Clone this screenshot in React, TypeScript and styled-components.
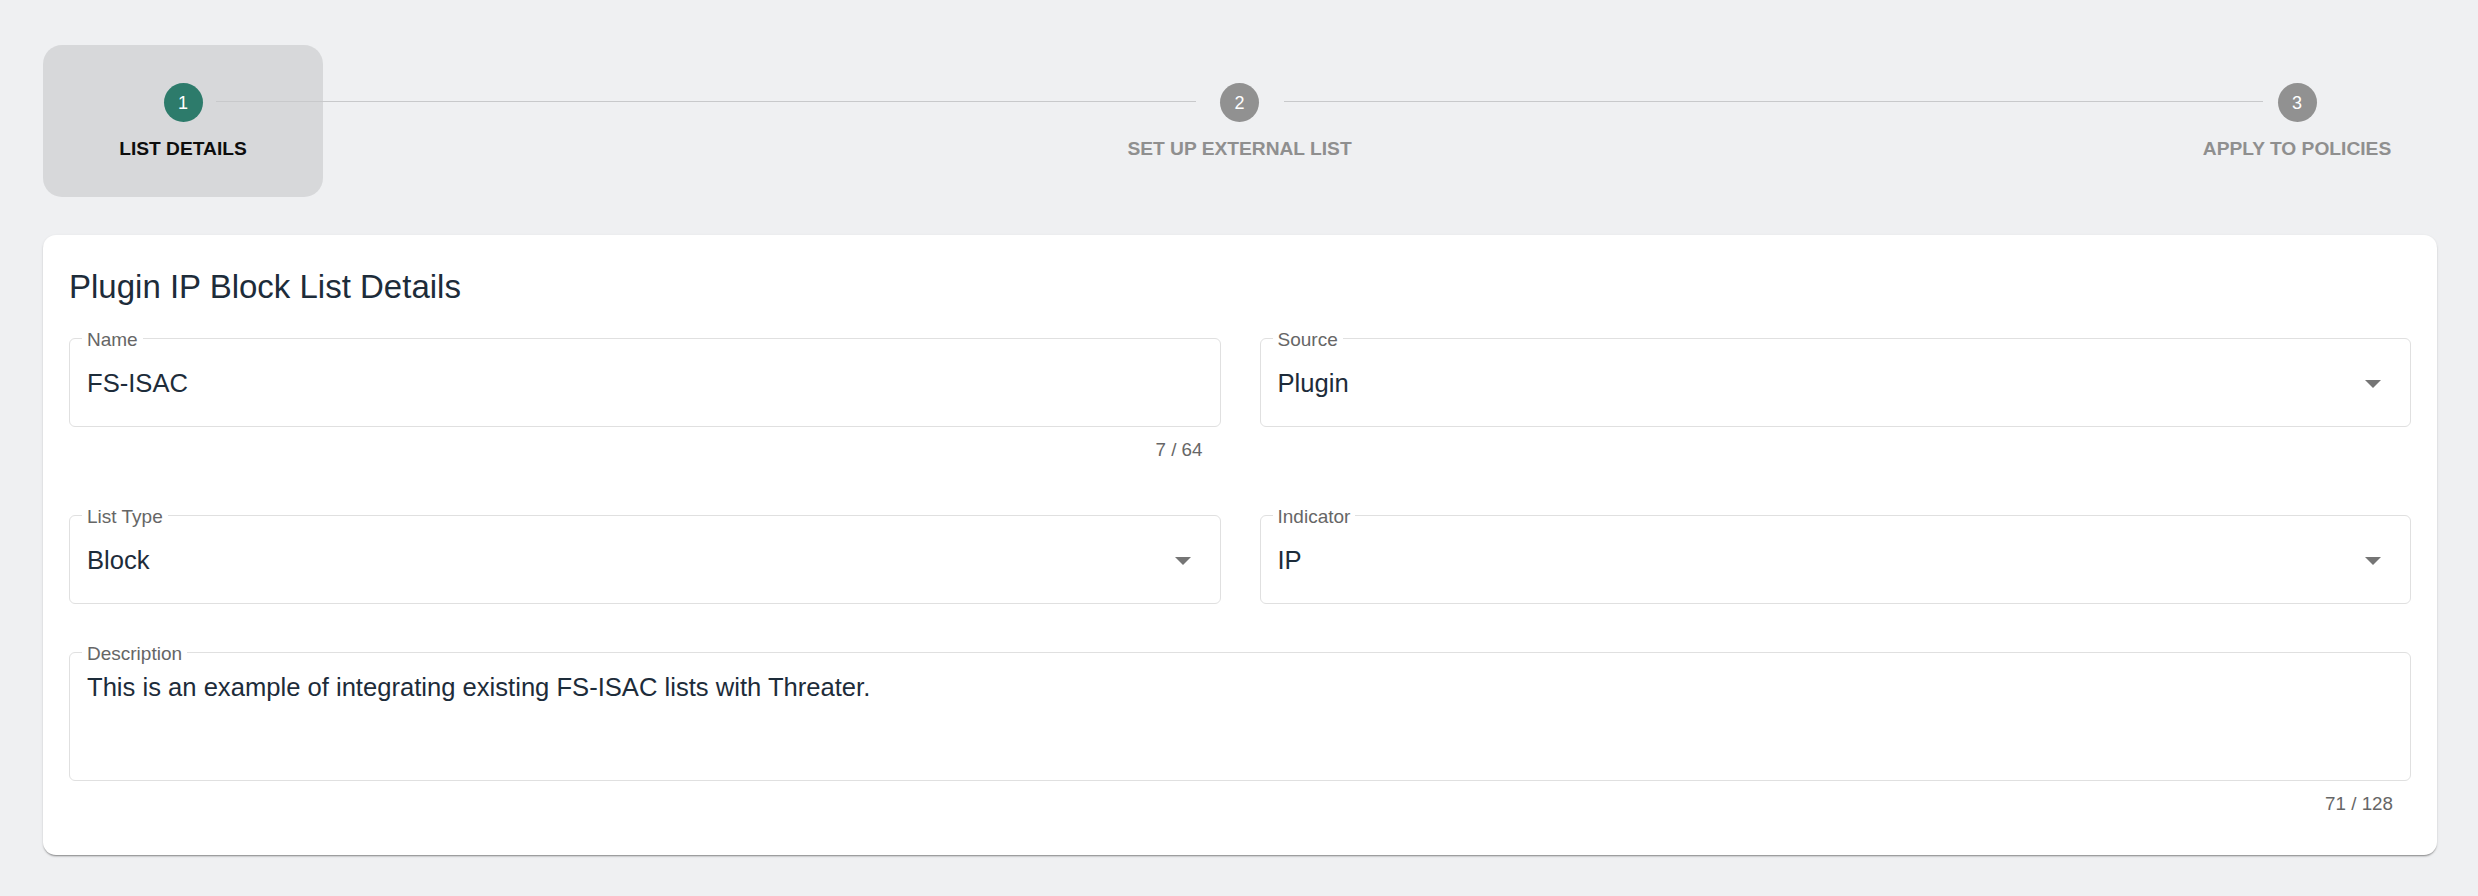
import React from "react";
import styled, { createGlobalStyle } from "styled-components";

const GlobalStyle = createGlobalStyle`
  html, body {
    margin: 0;
    padding: 0;
    background: #eff0f2;
  }
  body {
    font-family: "Liberation Sans", Arial, Helvetica, sans-serif;
  }
  * { box-sizing: border-box; }
`;

const Page = styled.div`
  min-height: 100vh;
  padding: 45px 41px 40px 43px;
  background: #eff0f2;
`;

const Stepper = styled.div`
  display: flex;
  align-items: flex-start;
`;

const Step = styled.div<{ $active?: boolean }>`
  width: 280px;
  flex-shrink: 0;
  display: flex;
  flex-direction: column;
  align-items: center;
  padding: 38px 0 34px;
  border-radius: 19px;
  background: ${(p) => (p.$active ? "#d7d8da" : "transparent")};
`;

const StepCircle = styled.div<{ $active?: boolean }>`
  width: 39px;
  height: 39px;
  border-radius: 50%;
  background: ${(p) => (p.$active ? "#2d7b6b" : "#919191")};
  color: #ffffff;
  font-size: 18px;
  line-height: 1;
  display: flex;
  align-items: center;
  justify-content: center;
`;

const StepLabel = styled.div<{ $active?: boolean }>`
  margin-top: 13px;
  font-size: 19.2px;
  line-height: 28px;
  font-weight: 700;
  text-transform: uppercase;
  white-space: nowrap;
  color: ${(p) => (p.$active ? "#0d0d0d" : "#8f8f8f")};
`;

const Connector = styled.div<{ $inL: number; $inR: number }>`
  flex: 1;
  height: 1px;
  margin-top: 56px;
  margin-left: ${(p) => -p.$inL}px;
  margin-right: ${(p) => -p.$inR}px;
  background: #c8c9cb;
  position: relative;
  z-index: 1;
`;

const Card = styled.section`
  margin-top: 38px;
  background: #ffffff;
  border-radius: 13px;
  padding: 26px 26px 34px;
  box-shadow: 0 2px 2px -1px rgba(0, 0, 0, 0.35), 0 1px 3px rgba(0, 0, 0, 0.1),
    0 1px 1px rgba(0, 0, 0, 0.06);
`;

const Title = styled.h2`
  margin: 0 0 26px;
  font-size: 33px;
  line-height: 51px;
  font-weight: 400;
  color: #1d2c3a;
`;

const FormGrid = styled.div`
  display: grid;
  grid-template-columns: 1fr 1fr;
  column-gap: 39px;
  row-gap: 48px;
  align-items: start;
`;

const FieldGroup = styled.div<{ $wide?: boolean }>`
  display: flex;
  flex-direction: column;
  grid-column: ${(p) => (p.$wide ? "1 / span 2" : "auto")};
`;

const Outline = styled.div<{ $tall?: boolean }>`
  position: relative;
  height: ${(p) => (p.$tall ? "129px" : "89px")};
  border: 1px solid #e0e0e0;
  border-radius: 6px;
  display: flex;
  align-items: ${(p) => (p.$tall ? "flex-start" : "center")};
  padding: ${(p) => (p.$tall ? "16px 17px 0" : "0 29px 0 17px")};
`;

const FloatLabel = styled.span`
  position: absolute;
  top: -9px;
  left: 12px;
  padding: 0 5px;
  background: #ffffff;
  font-size: 19px;
  line-height: 1;
  color: #666666;
  white-space: nowrap;
`;

const Value = styled.div`
  flex: 1;
  font-size: 25.6px;
  line-height: 36px;
  color: #1d2c3a;
  white-space: nowrap;
`;

const Arrow = styled.svg`
  width: 16px;
  height: 8px;
  flex-shrink: 0;
  margin-top: 3px;
  fill: #757575;
`;

const Counter = styled.div`
  margin: 6px 18px 1px 0;
  text-align: right;
  font-size: 18.8px;
  line-height: 33px;
  color: #666666;
`;

type FieldProps = {
  label: string;
  value: string;
  select?: boolean;
  tall?: boolean;
};

const Field = ({ label, value, select, tall }: FieldProps) => (
  <Outline $tall={tall}>
    <FloatLabel>{label}</FloatLabel>
    <Value>{value}</Value>
    {select && (
      <Arrow viewBox="0 0 16 8" aria-hidden="true">
        <path d="M0 0 L16 0 L8 8 Z" />
      </Arrow>
    )}
  </Outline>
);

const steps = ["List Details", "Set up External List", "Apply to Policies"];

export default function App() {
  return (
    <>
      <GlobalStyle />
      <Page>
        <Stepper>
          <Step $active>
            <StepCircle $active>1</StepCircle>
            <StepLabel $active>{steps[0]}</StepLabel>
          </Step>
          <Connector $inL={107} $inR={96} />
          <Step>
            <StepCircle>2</StepCircle>
            <StepLabel>{steps[1]}</StepLabel>
          </Step>
          <Connector $inL={96} $inR={106} />
          <Step>
            <StepCircle>3</StepCircle>
            <StepLabel>{steps[2]}</StepLabel>
          </Step>
        </Stepper>

        <Card>
          <Title>Plugin IP Block List Details</Title>
          <FormGrid>
            <FieldGroup>
              <Field label="Name" value="FS-ISAC" />
              <Counter>7 / 64</Counter>
            </FieldGroup>
            <FieldGroup>
              <Field label="Source" value="Plugin" select />
            </FieldGroup>
            <FieldGroup>
              <Field label="List Type" value="Block" select />
            </FieldGroup>
            <FieldGroup>
              <Field label="Indicator" value="IP" select />
            </FieldGroup>
            <FieldGroup $wide>
              <Field
                label="Description"
                value="This is an example of integrating existing FS-ISAC lists with Threater."
                tall
              />
              <Counter>71 / 128</Counter>
            </FieldGroup>
          </FormGrid>
        </Card>
      </Page>
    </>
  );
}
